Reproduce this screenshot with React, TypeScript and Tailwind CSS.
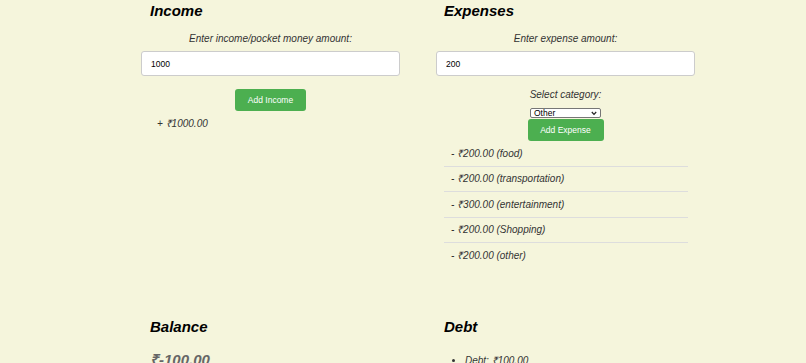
import { useState } from 'react'

const expenses = [
  { amount: 200, category: 'food' },
  { amount: 200, category: 'transportation' },
  { amount: 300, category: 'entertainment' },
  { amount: 200, category: 'Shopping' },
  { amount: 200, category: 'other' },
]

export default function App() {
  const [income, setIncome] = useState('1000')
  const [expense, setExpense] = useState('200')

  return (
    <div className="min-h-screen bg-[#f5f5dc] italic text-[#333] font-['Liberation_Sans',Arial,sans-serif] pl-[141px] pt-[2px]">
      <div className="flex gap-[36px]">
        {/* Income */}
        <section className="w-[259px]">
          <h2 className="pl-[9px] text-[15px] leading-[18px] font-bold text-black">Income</h2>
          <p className="mt-[13px] text-center text-[10px] leading-[12px]">Enter income/pocket money amount:</p>
          <input
            value={income}
            onChange={e => setIncome(e.target.value)}
            className="mt-[6px] block w-full h-[25px] px-[9px] not-italic text-[8.5px] text-black bg-white border border-[#ccc] rounded-[3px] outline-none"
          />
          <div className="mt-[13px] flex justify-center">
            <button className="h-[22px] px-[12.5px] not-italic text-[8.5px] text-white bg-[#4caf50] rounded-[3px]">
              Add Income
            </button>
          </div>
          <p className="mt-[7px] pl-[16px] text-[10px] leading-[12px]">+ ₹1000.00</p>
        </section>

        {/* Expenses */}
        <section className="w-[259px]">
          <h2 className="pl-[8px] text-[15px] leading-[18px] font-bold text-black">Expenses</h2>
          <p className="mt-[13px] text-center text-[10px] leading-[12px]">Enter expense amount:</p>
          <input
            value={expense}
            onChange={e => setExpense(e.target.value)}
            className="mt-[6px] block w-full h-[25px] px-[9px] not-italic text-[8.5px] text-black bg-white border border-[#ccc] rounded-[3px] outline-none"
          />
          <p className="mt-[13px] text-center text-[10px] leading-[12px]">Select category:</p>
          <div className="mt-[7px] flex flex-col items-center">
            <div className="relative w-[71px] h-[10px] bg-white border border-[#767676] rounded-[2px]">
              <span className="absolute left-[3px] top-[-1px] not-italic text-[8.5px] leading-[10px] text-black">Other</span>
              <svg className="absolute right-[3px] top-[2px]" width="6" height="5" viewBox="0 0 6 5">
                <path d="M0.8 1 L3 3.4 L5.2 1" fill="none" stroke="#222" strokeWidth="1.2" />
              </svg>
            </div>
            <button className="mt-[1px] h-[22px] w-[76px] not-italic text-[8.5px] text-white bg-[#4caf50] rounded-[3px]">
              Add Expense
            </button>
          </div>
          <ul className="ml-[8px] w-[244px]">
            {expenses.map((x, i) => (
              <li
                key={i}
                className={`pl-[7px] pt-[6.5px] pb-[6px] text-[10px] leading-[12px] ${i < expenses.length - 1 ? 'border-b border-[#ddd]' : ''}`}
              >
                - ₹{x.amount.toFixed(2)} ({x.category})
              </li>
            ))}
          </ul>
        </section>
      </div>

      <div className="mt-[50px] flex gap-[36px]">
        {/* Balance */}
        <section className="w-[259px]">
          <h2 className="pl-[9px] text-[15px] leading-[18px] font-bold text-black">Balance</h2>
          <p className="mt-[15px] pl-[9px] text-[15px] leading-[18px] font-bold text-[#666]">₹-100.00</p>
        </section>

        {/* Debt */}
        <section className="w-[259px]">
          <h2 className="pl-[8px] text-[15px] leading-[18px] font-bold text-black">Debt</h2>
          <ul className="mt-[19px] pl-[29px] list-disc text-[10px] leading-[12px]">
            <li>Debt: ₹100.00</li>
          </ul>
        </section>
      </div>
    </div>
  )
}
